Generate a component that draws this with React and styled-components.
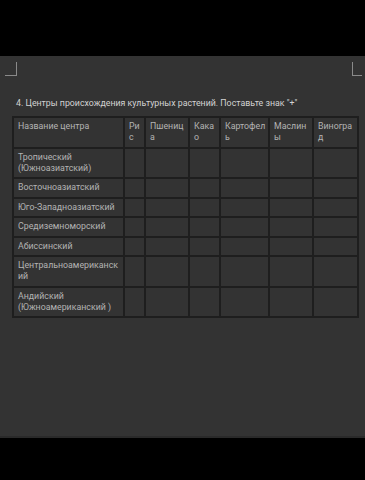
import React from 'react';
import styled, { createGlobalStyle } from 'styled-components';

const GlobalStyle = createGlobalStyle`
    html, body {
        margin: 0;
        padding: 0;
        background: #000;
    }
    body {
        font-family: Roboto, "Noto Sans", "DejaVu Sans", sans-serif;
    }
`;

const columns = [
    { title: 'Название центра', width: 111 },
    { title: 'Рис', width: 21 },
    { title: 'Пшеница', width: 44 },
    { title: 'Какао', width: 31 },
    { title: 'Картофель', width: 49 },
    { title: 'Маслины', width: 44 },
    { title: 'Виноград', width: 45 },
];

const centers = [
    'Тропический (Южноазиатский)',
    'Восточноазиатский',
    'Юго-Западноазиатский',
    'Средиземноморский',
    'Абиссинский',
    'Центральноамериканский',
    'Андийский (Южноамериканский )',
];

const App = () => {
    return (
        <>
            <GlobalStyle />
            <Screen>
                <Page>
                    <CornerRow>
                        <Corner side="left" />
                        <Corner side="right" />
                    </CornerRow>
                    <Heading>4. Центры происхождения культурных растений. Поставьте знак "+"</Heading>
                    <Table>
                        <colgroup>
                            {columns.map((c) => (
                                <col key={c.title} style={{ width: c.width }} />
                            ))}
                        </colgroup>
                        <thead>
                            <tr>
                                {columns.map((c) => (
                                    <HeadCell key={c.title}>{c.title}</HeadCell>
                                ))}
                            </tr>
                        </thead>
                        <tbody>
                            {centers.map((name) => (
                                <tr key={name}>
                                    <Cell>{name}</Cell>
                                    {columns.slice(1).map((c) => (
                                        <Cell key={c.title} />
                                    ))}
                                </tr>
                            ))}
                        </tbody>
                    </Table>
                </Page>
            </Screen>
        </>
    );
};

export default App;

const Screen = styled.div`
    width: 365px;
    height: 480px;
    padding-top: 56px;
    box-sizing: border-box;
    background: #000;
`;

const Page = styled.div`
    height: 382px;
    box-sizing: border-box;
    background: #333333;
    border-bottom: 2px solid #2a2a2a;
    display: flex;
    flex-direction: column;
    padding: 6px 0 0 0;
`;

const CornerRow = styled.div`
    display: flex;
    justify-content: space-between;
    padding: 0 3px 0 5px;
    height: 14px;
`;

const Corner = styled.div`
    width: ${({ side }) => (side === 'left' ? '11px' : '9px')};
    height: 13px;
    border-bottom: 1px solid #8a8a8a;
    ${({ side }) => (side === 'left' ? 'border-right' : 'border-left')}: 1px solid #8a8a8a;
`;

const Heading = styled.div`
    margin: 22px 0 0 16px;
    font-size: 8.8px;
    line-height: 11px;
    font-weight: 400;
    color: #d2d2d2;
    white-space: nowrap;
`;

const Table = styled.table`
    margin: 7px 0 0 12px;
    width: 346px;
    table-layout: fixed;
    border-collapse: collapse;
    border: 2px solid #1e1e1e;
`;

const Cell = styled.td`
    border: 2px solid #1e1e1e;
    padding: 3px 1px 3.5px 4px;
    vertical-align: top;
    font-size: 8.8px;
    line-height: 11px;
    color: #b4b4b4;
    overflow-wrap: anywhere;
    text-align: left;
`;

const HeadCell = styled(Cell).attrs({ as: 'th' })`
    font-weight: 400;
`;
